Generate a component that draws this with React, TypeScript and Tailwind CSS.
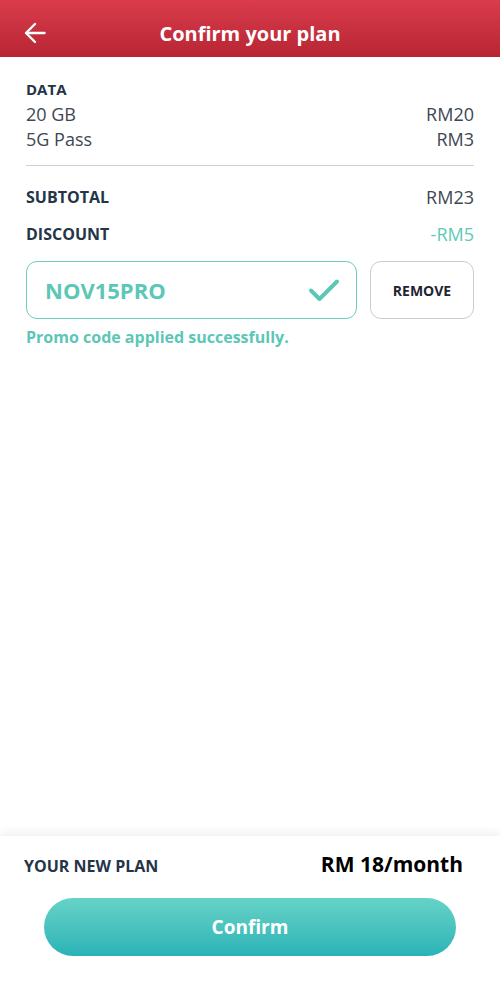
import React, { useState } from 'react';

const Row = ({ label, value, bold = false, valueClass = 'text-[#3e4752]' }: { label: string; value: string; bold?: boolean; valueClass?: string }) => (
    <div className="flex items-center justify-between">
        <span className={bold ? 'text-[16px] font-bold text-[#253548]' : 'text-[18px] text-[#3e4752]'}>{label}</span>
        <span className={`text-[18px] ${valueClass}`}>{value}</span>
    </div>
);

export default function App() {
    const [code] = useState('NOV15PRO');

    return (
        <div className="flex h-[982px] w-[500px] flex-col bg-white font-['Open_Sans',sans-serif]">
            {/* Header */}
            <header className="relative flex h-[57px] shrink-0 items-center justify-center bg-gradient-to-b from-[#da3c4c] to-[#b72533] pt-[10px]">
                <button className="absolute left-[22px] top-[20px] p-0.5" aria-label="Back">
                    <svg width="22" height="22" viewBox="0 0 22 22" fill="none" stroke="white" strokeWidth="2.4" strokeLinecap="round" strokeLinejoin="round">
                        <path d="M20.5 11H2.5" />
                        <path d="M11 2L2 11l9 9" />
                    </svg>
                </button>
                <h1 className="text-[20px] font-bold leading-[28px] text-white">Confirm your plan</h1>
            </header>

            {/* Content */}
            <main className="flex-1 px-[26px] pt-[22px]">
                <div className="text-[15px] font-bold leading-[20px] text-[#253548]">DATA</div>
                <div className="mt-[3px] flex flex-col leading-[25px]">
                    <Row label="20 GB" value="RM20" />
                    <Row label="5G Pass" value="RM3" />
                </div>

                <div className="mt-[13px] h-px bg-[#c9d1d9]" />

                <div className="mt-[19px] flex flex-col gap-[13px] leading-[24px]">
                    <Row label="SUBTOTAL" value="RM23" bold />
                    <Row label="DISCOUNT" value="-RM5" bold valueClass="text-[#5dcab8]" />
                </div>

                <div className="mt-[15px] flex gap-[13px]">
                    <div className="flex h-[58px] flex-1 items-center justify-between rounded-[11px] border border-[#6cccbd] pl-[18px] pr-[16px]">
                        <span className="text-[22px] font-bold text-[#5cc7b6]">{code}</span>
                        <svg width="32" height="24" viewBox="0 0 32 24" fill="none" stroke="#5cc7b6" strokeWidth="4" strokeLinecap="round" strokeLinejoin="round">
                            <path d="M3 12.5l8.5 8.5L29 3.5" />
                        </svg>
                    </div>
                    <button className="h-[58px] w-[104px] rounded-[11px] border border-[#c6ced6] text-[14px] font-bold text-[#1f2530]">
                        REMOVE
                    </button>
                </div>

                <p className="mt-[7px] text-[16px] font-bold leading-[22px] text-[#5cc7b6]">Promo code applied successfully.</p>
            </main>

            {/* Footer */}
            <footer className="shrink-0 bg-white pb-[26px] pt-[14px] shadow-[0_-4px_8px_rgba(0,0,0,0.06)]">
                <div className="flex items-baseline justify-between pl-[24px] pr-[37px] leading-[28px]">
                    <span className="text-[16px] font-bold text-[#253548]">YOUR NEW PLAN</span>
                    <span className="text-[21px] font-bold text-black">RM 18/month</span>
                </div>
                <div className="mt-[18px] px-[44px]">
                    <button className="h-[58px] w-full rounded-full bg-gradient-to-b from-[#65d3c6] to-[#28b3b7] text-[19px] font-bold text-white">
                        Confirm
                    </button>
                </div>
            </footer>
        </div>
    );
}
